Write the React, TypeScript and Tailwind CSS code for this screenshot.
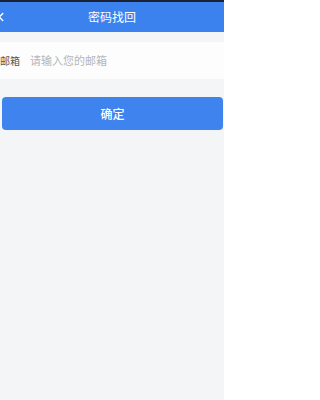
import { ChevronLeft } from "lucide-react";

const font = "font-['Noto_Sans_CJK_SC','Noto_Sans',sans-serif]";

export default function App() {
  return (
    <div className={`flex min-h-screen w-[224px] flex-col overflow-hidden bg-[#f4f5f7] ${font}`}>
      <div className="h-[2px] bg-[#1b2236]" />
      <header className="relative flex h-[30px] items-center justify-center bg-[#3c82ee]">
        <ChevronLeft className="absolute left-[-6px] top-[8px] size-[14px] text-white" strokeWidth={2.5} />
        <h1 className="text-[12px] leading-none text-white">密码找回</h1>
      </header>
      <div className="h-[10px]" />
      <label className="flex h-[37px] items-center bg-[#fdfdfd]">
        <span className="w-[30px] shrink-0 text-[10px] text-[#555]">邮箱</span>
        <input
          type="email"
          placeholder="请输入您的邮箱"
          className="min-w-0 flex-1 bg-transparent text-[11px] text-[#333] outline-none placeholder:text-[#b4b6ba]"
        />
      </label>
      <div className="h-[18px]" />
      <button
        type="button"
        className="ml-[2px] mr-[1px] flex h-[33px] items-center justify-center rounded-[4px] bg-[#3f84ee] text-[12px] font-medium text-white"
      >
        确定
      </button>
    </div>
  );
}
